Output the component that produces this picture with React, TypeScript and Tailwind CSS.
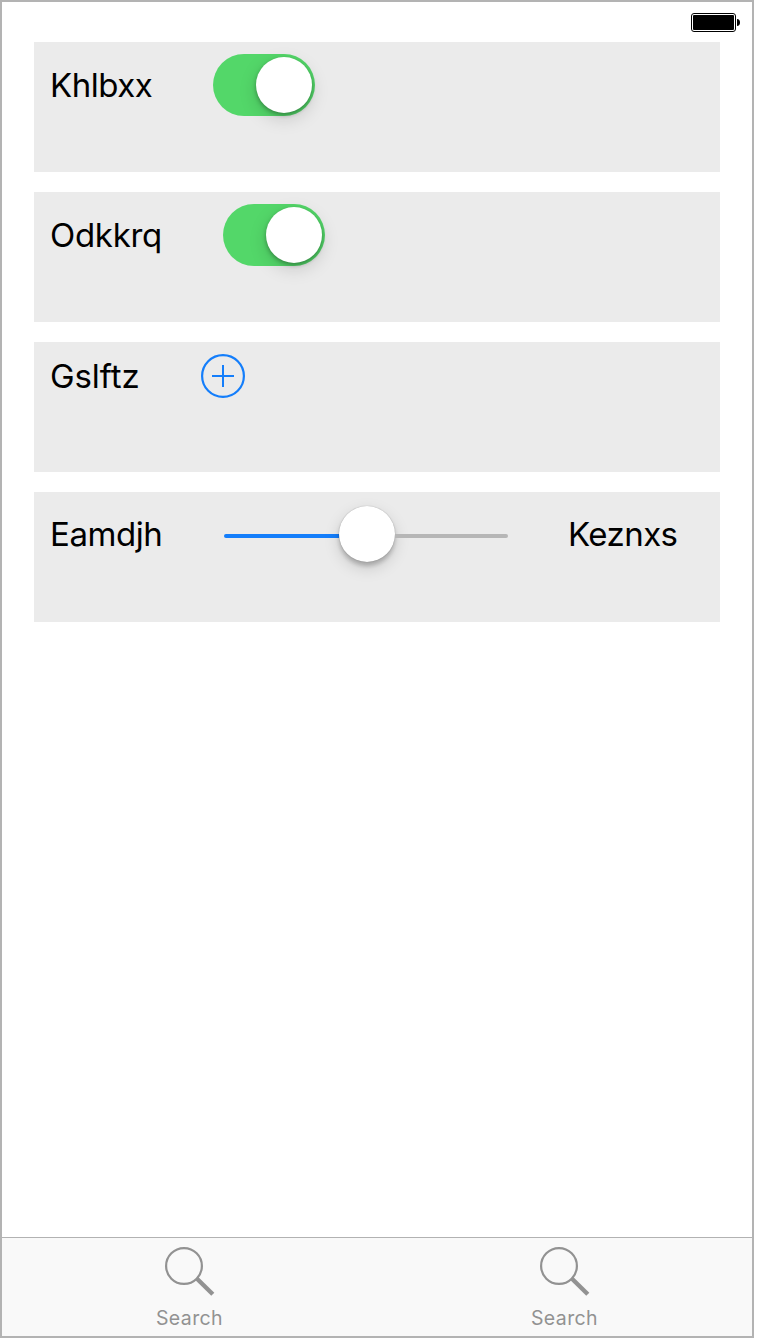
import type { ReactNode } from "react";

function Row({ children }: { children: ReactNode }) {
  return <section className="flex h-[130px] items-start bg-[#ebebeb] pt-3 pl-4">{children}</section>;
}

function Label({ text, className }: { text: string; className: string }) {
  return (
    <span className={`shrink-0 whitespace-nowrap text-[33px] leading-[40px] text-black ${className}`}>{text}</span>
  );
}

function Toggle() {
  return (
    <div className="flex h-[62px] w-[102px] shrink-0 items-center justify-end rounded-full bg-[#53d769] pr-[3px]">
      <div className="size-14 rounded-full bg-white shadow-[0_6px_18px_rgba(0,0,0,0.15),0_2px_4px_rgba(0,0,0,0.3)]" />
    </div>
  );
}

function PlusButton() {
  return (
    <svg className="size-11 shrink-0" viewBox="0 0 44 44" fill="none" stroke="#147efb" strokeWidth="2">
      <circle cx="22" cy="22" r="20.9" strokeWidth="2.2" />
      <path d="M11 22H33M22 11V33" />
    </svg>
  );
}

function Slider() {
  return (
    <div className="flex h-[60px] w-[284px] shrink-0 items-center">
      <div className="mt-1 h-1 w-[115px] rounded-l-full bg-[#147efb]" />
      <div className="size-14 shrink-0 rounded-full bg-white shadow-[0_6px_16px_rgba(0,0,0,0.15),0_4px_4px_rgba(0,0,0,0.2),0_0_1px_rgba(0,0,0,0.35)]" />
      <div className="mt-1 h-1 w-[113px] rounded-r-full bg-[#b6b6b6]" />
    </div>
  );
}

function Battery() {
  return (
    <svg className="h-[19px] w-[49px]" viewBox="0 0 49 19">
      <rect x="0.5" y="0.5" width="44" height="18" rx="2.5" fill="white" stroke="black" />
      <rect x="2" y="2" width="41" height="15" rx="1" fill="black" />
      <path d="M46 6C48 6 49 7.5 49 9.5S48 13 46 13Z" fill="black" />
    </svg>
  );
}

function SearchTab() {
  return (
    <div className="flex flex-1 flex-col items-center pt-[9px] text-[#929292]">
      <svg className="h-[50px] w-[50px]" viewBox="0 0 50 50" fill="none" stroke="currentColor">
        <circle cx="19" cy="19" r="17.9" strokeWidth="2.2" />
        <path d="M31.5 31.3L47.8 47.2" strokeWidth="4.4" />
      </svg>
      <span className="mt-[9px] text-[19.5px] leading-6 tracking-[0.4px]">Search</span>
    </div>
  );
}

export default function App() {
  return (
    <div className="h-[1340px] w-[760px] bg-white font-['Inter',sans-serif]">
      <div className="flex h-[1338px] w-[754px] flex-col border-2 border-[#b3b3b3] bg-white">
        <header className="flex h-10 shrink-0 justify-end pt-[11px] pr-3">
          <Battery />
        </header>
        <main className="flex flex-1 flex-col gap-5 px-8">
          <Row>
            <div className="flex items-center">
              <Label text="Khlbxx" className="w-[163px] tracking-[-0.5px]" />
              <Toggle />
            </div>
          </Row>
          <Row>
            <div className="flex items-center">
              <Label text="Odkkrq" className="w-[173px] tracking-[-0.3px]" />
              <Toggle />
            </div>
          </Row>
          <Row>
            <div className="flex items-center">
              <Label text="Gslftz" className="w-[151px] tracking-[-0.1px]" />
              <PlusButton />
            </div>
          </Row>
          <Row>
            <div className="flex items-center">
              <Label text="Eamdjh" className="w-[174px] tracking-[-0.45px]" />
              <Slider />
              <Label text="Keznxs" className="ml-[60px] tracking-[-0.55px]" />
            </div>
          </Row>
        </main>
        <nav className="flex h-[99px] shrink-0 border-t border-[#b2b2b2] bg-[#f9f9f9]">
          <SearchTab />
          <SearchTab />
        </nav>
      </div>
    </div>
  );
}
